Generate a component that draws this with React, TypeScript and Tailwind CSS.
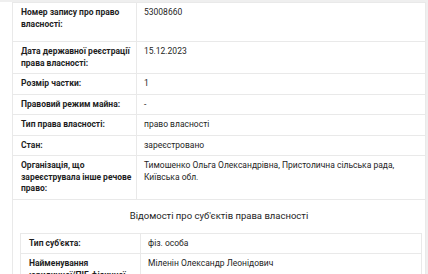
export default function App() {
  const rows: { label: string; value: string; h?: string }[] = [
    { label: "Номер запису про право власності:", value: "53008660", h: "h-[39px]" },
    { label: "Дата державної реєстрації права власності:", value: "15.12.2023" },
    { label: "Розмір частки:", value: "1" },
    { label: "Правовий режим майна:", value: "-" },
    { label: "Тип права власності:", value: "право власності" },
    { label: "Стан:", value: "зареєстровано" },
    {
      label: "Організація, що зареєструвала інше речове право:",
      value: "Тимошенко Ольга Олександрівна, Пристолична сільська рада, Київська обл.",
    },
  ];
  const subj = [
    { label: "Тип суб'єкта:", value: "фіз. особа" },
    { label: "Найменування юридичної/ПІБ фізичної особи:", value: "Міленін Олександр Леонідович" },
  ];
  return (
    <div className="w-[428px] h-[274px] overflow-hidden bg-white font-['Roboto',sans-serif] text-[#1e1e1e] text-[8.5px] leading-[11.5px]">
      <div className="h-[2px] bg-[#efefef]" />
      <div className="flex">
        <div className="w-[12px]" />
        <table className="w-[414px] border-collapse table-fixed">
          <colgroup>
            <col className="w-[124px]" />
            <col />
          </colgroup>
          <tbody>
            {rows.map((r) => (
              <tr key={r.label} className={r.h}>
                <td className="border border-[#e9e9e9] align-top pl-[8px] pr-[4px] py-[4px] font-bold">{r.label}</td>
                <td className="border border-[#e9e9e9] align-top px-[7px] py-[4px]">{r.value}</td>
              </tr>
            ))}
            <tr>
              <td colSpan={2} className="border border-[#e9e9e9] px-[7px] pt-[10px] pb-[20px]">
                <div className="text-center text-[9.5px] leading-[12px] mb-[11px]">
                  Відомості про суб'єктів права власності
                </div>
                <table className="w-[402px] border-collapse table-fixed">
                  <colgroup>
                    <col className="w-[120px]" />
                    <col />
                  </colgroup>
                  <tbody>
                    {subj.map((r) => (
                      <tr key={r.label}>
                        <td className="border border-[#e9e9e9] align-top pl-[8px] pr-[4px] py-[4px] font-bold">{r.label}</td>
                        <td className="border border-[#e9e9e9] align-top px-[7px] py-[4px]">{r.value}</td>
                      </tr>
                    ))}
                  </tbody>
                </table>
              </td>
            </tr>
          </tbody>
        </table>
        <div className="w-[2px] bg-[#efefef]" />
      </div>
    </div>
  );
}
